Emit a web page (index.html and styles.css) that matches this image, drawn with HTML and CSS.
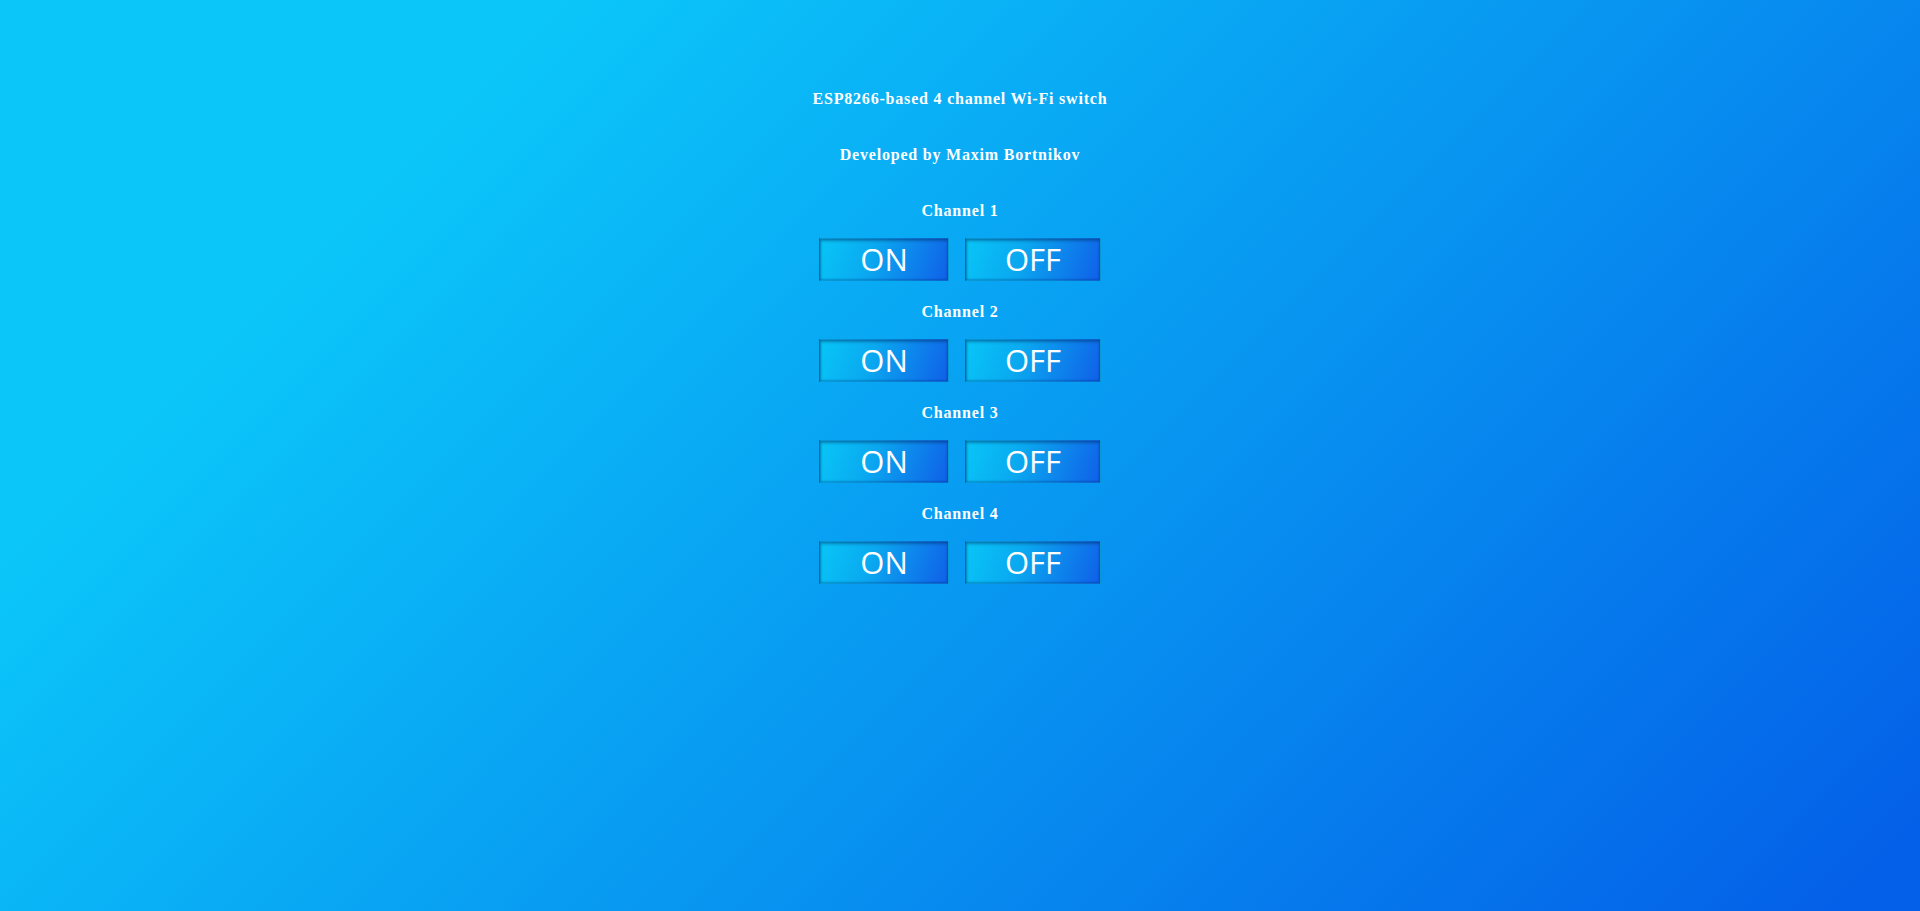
FILE: index.html
```html
<!DOCTYPE html>
<html lang="en">
<head>
<meta charset="utf-8">
<title>ESP8266 Wi-Fi switch</title>
<link rel="stylesheet" href="styles.css">
</head>
<body>
<main class="page">
  <h1 class="title">ESP8266-based 4 channel Wi-Fi switch</h1>
  <h2 class="author">Developed by Maxim Bortnikov</h2>
  <section class="channel">
    <h3 class="channel-name">Channel 1</h3>
    <div class="buttons"><button class="btn btn-on">ON</button><button class="btn btn-off">OFF</button></div>
  </section>
  <section class="channel">
    <h3 class="channel-name">Channel 2</h3>
    <div class="buttons"><button class="btn btn-on">ON</button><button class="btn btn-off">OFF</button></div>
  </section>
  <section class="channel">
    <h3 class="channel-name">Channel 3</h3>
    <div class="buttons"><button class="btn btn-on">ON</button><button class="btn btn-off">OFF</button></div>
  </section>
  <section class="channel">
    <h3 class="channel-name">Channel 4</h3>
    <div class="buttons"><button class="btn btn-on">ON</button><button class="btn btn-off">OFF</button></div>
  </section>
</main>
</body>
</html>
```
FILE: styles.css
```css
html, body {
  margin: 0;
  padding: 0;
  height: 100%;
}
body {
  background: linear-gradient(135deg, #0bc6f9 20%, #0460e8 97%);
  font-family: "Liberation Serif", "Times New Roman", serif;
  color: #fff;
  overflow: hidden;
}
.page {
  display: flex;
  flex-direction: column;
  align-items: center;
  padding-top: 89px;
}
.title, .author, .channel-name {
  margin: 0;
  font-size: 16px;
  line-height: 20px;
  font-weight: bold;
  letter-spacing: 0.8px;
  text-align: center;
}
.author {
  margin-top: 36px;
}
.channel {
  display: flex;
  flex-direction: column;
  align-items: center;
  margin-top: 36px;
}
.channel + .channel {
  margin-top: 21px;
}
.buttons {
  display: flex;
  gap: 16px;
  margin-top: 17px;
}
.btn {
  box-sizing: border-box;
  height: 43px;
  padding: 0;
  margin: 0;
  border: 1px solid rgba(10, 90, 160, 0.4);
  background: linear-gradient(110deg, #08c6f7 0%, #0aa9f0 40%, #1060e8 100%);
  box-shadow: inset 0 2px 3px rgba(0, 40, 90, 0.4), inset 1px 0 2px rgba(0, 40, 90, 0.25), inset -1px -1px 2px rgba(0, 40, 120, 0.2);
  color: #fff;
  font-family: "Open Sans", "Noto Sans", sans-serif;
  font-size: 31px;
  line-height: 41px;
  text-align: center;
  cursor: pointer;
}
.btn-on {
  width: 130px;
}
.btn-off {
  width: 136px;
}
```
